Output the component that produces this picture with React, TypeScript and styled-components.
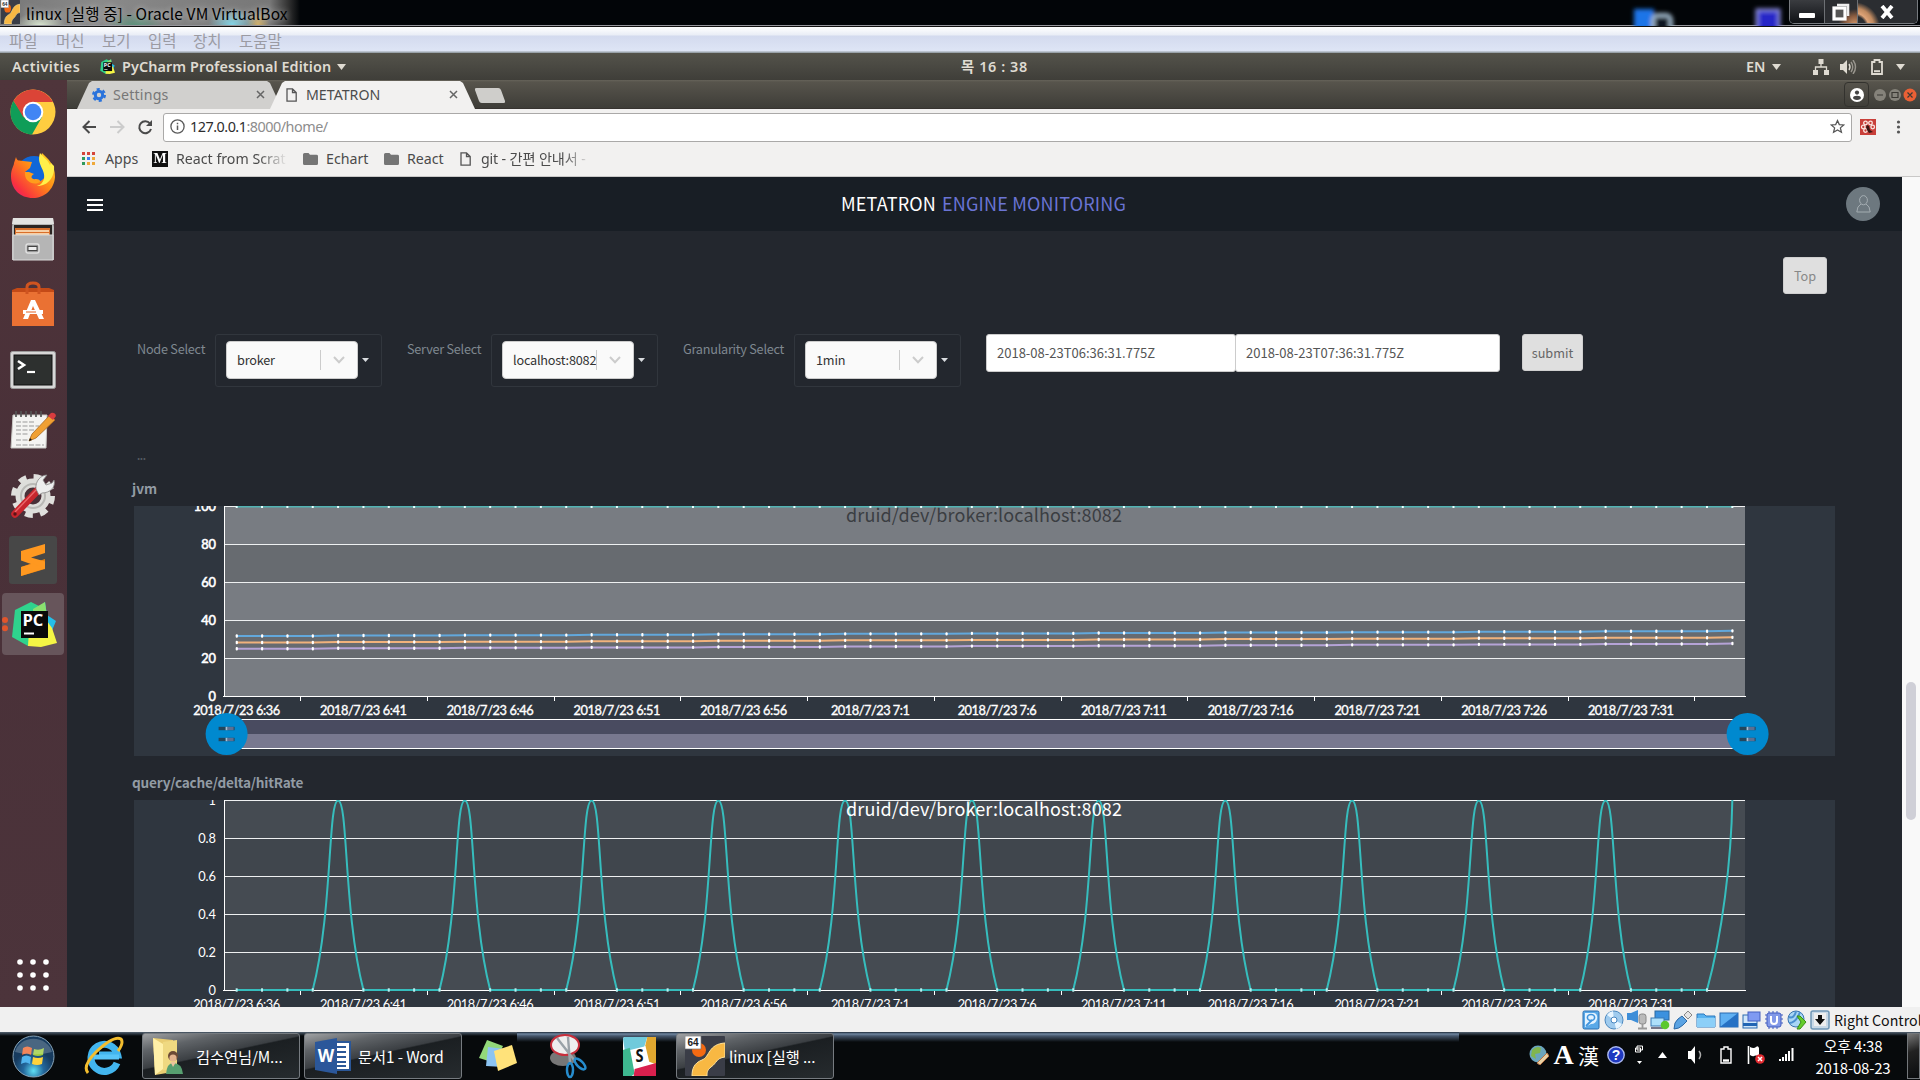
import React from 'react';
import styled, { createGlobalStyle } from 'styled-components';

const PAGE_FONT = '"Noto Sans CJK KR", "Noto Sans", sans-serif';
const UBUNTU_FONT = '"Noto Sans", "Noto Sans CJK KR", sans-serif';

const GlobalStyle = createGlobalStyle`
  html, body { margin: 0; padding: 0; background: #000; overflow: hidden; }
  * { box-sizing: border-box; }
  svg { display: block; flex: none; }
`;

const Desktop = styled.div`
  width: 1920px;
  height: 1080px;
  display: flex;
  flex-direction: column;
  overflow: hidden;
  white-space: nowrap;
  font-family: ${PAGE_FONT};
`;

/* ---------- host window frame ---------- */

const TitleBar = styled.header`
  height: 27px;
  flex: none;
  display: flex;
  align-items: flex-start;
  border-bottom: 1px solid #111;
  box-shadow: inset 0 -1px 0 #96969c;
  background:
    radial-gradient(ellipse 26px 14px at 40px 26px, rgba(225, 240, 215, .95), transparent),
    radial-gradient(ellipse 30px 14px at 135px 26px, rgba(80, 150, 120, .8), transparent),
    radial-gradient(ellipse 24px 16px at 232px 24px, rgba(130, 220, 240, .9), transparent),
    radial-gradient(ellipse 12px 14px at 258px 24px, rgba(230, 190, 100, .8), transparent),
    linear-gradient(90deg, #777 0, #8a8a8a 100px, #777 270px, #333 288px, #020508 300px);
`;

const WindowTitle = styled.div`
  margin-left: 6px;
  height: 26px;
  line-height: 27px;
  flex: 1;
  font-size: 15.5px;
  letter-spacing: 0.12px;
  color: #000;
  text-shadow: 0 0 6px rgba(255, 255, 255, .6);
`;

const Caption = styled.div`
  display: flex;
  width: 129px;
  height: 24px;
  margin-right: 2px;
  border: 1px solid #777b80;
  border-top: 0;
  border-radius: 0 0 5px 5px;
  overflow: hidden;
`;

const CaptionButton = styled.div<{ $w: number; $bg: string }>`
  width: ${p => p.$w}px;
  background: ${p => p.$bg};
  border-right: 1px solid #6d7074;
  display: flex;
  align-items: center;
  justify-content: center;
  &:last-child { border-right: 0; }
`;

const MenuBar = styled.nav`
  height: 26px;
  flex: none;
  display: flex;
  padding-left: 9px;
  background: linear-gradient(#fff 0, #e9edf6 8px, #d3daee 9px, #dee5f6 24px, #9aa3aa 25px);
  color: #9b9ba3;
  font-size: 15.5px;
  line-height: 26px;
`;

const MenuItem = styled.span<{ $w: number }>`
  width: ${p => p.$w}px;
`;

/* ---------- guest desktop ---------- */

const GnomeBar = styled.div`
  height: 27px;
  flex: none;
  display: flex;
  align-items: center;
  background: linear-gradient(#54534b, #3f3e39);
  color: #dfdbd2;
  font: 600 14.4px/26px ${UBUNTU_FONT};
  padding-left: 12px;
  padding-right: 15px;
`;

const GnomeItem = styled.span<{ $w: number; $ls?: number }>`
  width: ${p => p.$w}px;
  flex: none;
  letter-spacing: ${p => p.$ls ?? 0}px;
`;

const Spacer = styled.div<{ $w?: number }>`
  ${p => (p.$w === undefined ? 'flex: 1;' : `flex: none; width: ${p.$w}px;`)}
`;

const Guest = styled.div`
  height: 927px;
  flex: none;
  display: flex;
`;

const Dock = styled.aside`
  width: 67px;
  height: 927px;
  flex: none;
  display: flex;
  flex-direction: column;
  background: linear-gradient(#4f353b, #493038 45%, #4c343b);
`;

const DockCell = styled.div<{ $active?: boolean; $lift?: number }>`
  width: ${p => (p.$active ? 62 : 66)}px;
  height: ${p => (p.$active ? 62 : 64)}px;
  margin: ${p => (p.$active ? '1px 2px' : '0')};
  padding-bottom: ${p => Math.max(0, p.$lift ?? 0) * 2}px;
  padding-top: ${p => Math.max(0, -(p.$lift ?? 0)) * 2}px;
  border-radius: 4px;
  background: ${p => (p.$active ? '#67555b' : 'transparent')};
  display: flex;
  align-items: center;
  justify-content: center;
`;

const Browser = styled.div`
  flex: 1;
  min-width: 0;
  display: flex;
  flex-direction: column;
  font-family: ${UBUNTU_FONT};
`;

const TabStrip = styled.div`
  height: 29px;
  flex: none;
  display: flex;
  align-items: flex-end;
  background: linear-gradient(#66635a 0, #57544c 2px, #3e3d38 28px, #302a28 29px);
  padding-left: 10px;
`;

const Tab = styled.div<{ $active?: boolean; $w: number }>`
  width: ${p => p.$w}px;
  height: 28px;
  flex: none;
  margin-right: ${p => (p.$active ? -6 : -12)}px;
  background: ${p => (p.$active ? '#f2f1f0' : '#d1d0ce')};
  clip-path: polygon(0 100%, 12px 2px, 15px 0, calc(100% - 15px) 0, calc(100% - 12px) 2px, 100% 100%);
  display: flex;
  align-items: center;
  padding: 0 17px 1px ${p => (p.$active ? 16 : 15)}px;
  gap: ${p => (p.$active ? 9 : 7)}px;
  font-size: 14.2px;
  letter-spacing: ${p => (p.$active ? 0 : 0.2)}px;
  color: ${p => (p.$active ? '#4c4c4c' : '#777')};
  z-index: ${p => (p.$active ? 1 : 0)};
`;

const NewTab = styled.div`
  width: 26px;
  height: 15px;
  margin: 0 0 6px 8px;
  background: #cfcecb;
  border-radius: 2px;
  transform: skewX(20deg);
`;

const ProfileButton = styled.div`
  width: 25px;
  height: 25px;
  margin: 0 4px 2px 0;
  border: 1px solid #33322e;
  border-radius: 4px;
  display: flex;
  align-items: center;
  justify-content: center;
`;

const Toolbar = styled.div`
  height: 36px;
  flex: none;
  display: flex;
  align-items: center;
  background: #f2f1f0;
  padding: 0 13px 0 14px;
`;

const AddressBar = styled.div`
  width: 1689px;
  height: 29px;
  border: 1px solid #aaa9a8;
  border-radius: 3px;
  background: #fff;
  display: flex;
  align-items: center;
  padding: 0 6px 1px 6px;
  font-size: 14.4px;
  letter-spacing: -0.5px;
  color: #8d8d8d;
`;

const Host = styled.span`
  color: #2d2d2d;
  margin-left: 5px;
`;

const Bookmarks = styled.div`
  height: 32px;
  flex: none;
  display: flex;
  align-items: center;
  background: #f2f1f0;
  border-bottom: 1px solid #c9c8c7;
  padding: 0 0 4px 15px;
  font-size: 14.2px;
  line-height: 18px;
  color: #4b4b4b;
`;

const Bookmark = styled.div<{ $w: number; $gap: number; $fade?: boolean; $ls?: number }>`
  width: ${p => p.$w}px;
  display: flex;
  align-items: center;
  gap: ${p => p.$gap}px;
  overflow: hidden;
  letter-spacing: ${p => p.$ls ?? 0}px;
  ${p => p.$fade && '-webkit-mask-image: linear-gradient(90deg, #000 78%, transparent 99%);'}
`;

const MediumLogo = styled.div`
  width: 16px;
  height: 16px;
  background: #111;
  color: #fff;
  font: bold 14px/16px "Liberation Serif", serif;
  text-align: center;
`;

const Viewport = styled.div`
  height: 830px;
  flex: none;
  display: flex;
  font-family: ${PAGE_FONT};
`;

const Page = styled.main`
  width: 1835px;
  background: #23272e;
  overflow: hidden;
`;

const ScrollTrack = styled.div`
  width: 18px;
  background: #f9f9f9;
  padding: 505px 4px 0 4px;
`;

const ScrollThumb = styled.div`
  height: 138px;
  border-radius: 5px;
  background: #cfcfd7;
`;

const PageHeader = styled.div`
  height: 54px;
  display: flex;
  align-items: center;
  background: #181e25;
  padding: 0 22px 0 20px;
`;

const Burger = styled.div`
  width: 16px;
  height: 12px;
  margin-top: 2px;
  border-top: 2px solid #fff;
  border-bottom: 2px solid #fff;
  display: flex;
  align-items: center;
  &::after { content: ''; width: 16px; height: 2px; background: #fff; }
`;

const Brand = styled.div`
  width: 300px;
  margin-left: 738px;
  padding-bottom: 2px;
  font-size: 18px;
  letter-spacing: 0.18px;
  line-height: 52px;
  color: #fff;
  display: flex;
  gap: 6px;
  b { font-weight: 400; color: #6a74d4; }
`;

const Avatar = styled.div`
  width: 34px;
  height: 34px;
  border-radius: 50%;
  background: #6d787f;
  display: flex;
  align-items: center;
  justify-content: center;
`;

const TopRow = styled.div`
  display: flex;
  justify-content: flex-end;
  padding: 26px 75px 0 0;
`;

const GreyButton = styled.button<{ $w: number }>`
  width: ${p => p.$w}px;
  height: 37px;
  padding: 0 0 1px;
  border: 1px solid #cfcfcf;
  border-radius: 3px;
  background: #dfdfdf;
  color: ${p => (p.$w < 50 ? '#888' : '#666')};
  font: 12.7px ${PAGE_FONT};
`;

const Filters = styled.div`
  height: 54px;
  margin-top: 40px;
  display: flex;
  align-items: flex-start;
  padding-left: 70px;
`;

const FilterLabel = styled.label<{ $w: number }>`
  width: ${p => p.$w}px;
  line-height: 30px;
  font-size: 12.7px;
  letter-spacing: -0.25px;
  color: #7f8890;
`;

const SelectFrame = styled.div<{ $mr: number }>`
  width: 167px;
  height: 53px;
  margin-right: ${p => p.$mr}px;
  padding-bottom: 2px;
  border: 1px solid #31363d;
  border-radius: 3px;
  display: flex;
  align-items: center;
  padding-left: 10px;
  gap: 4px;
`;

const SelectControl = styled.div`
  width: 132px;
  height: 38px;
  border-radius: 4px;
  background: #fafafa;
  border: 1px solid #ccc;
  display: flex;
  align-items: center;
  padding-left: 10px;
  font-size: 12.7px;
  letter-spacing: -0.2px;
  color: #333;
`;

const SelectValue = styled.span`
  width: 83px;
  flex: none;
`;

const SelectArrow = styled.span`
  height: 20px;
  width: 37px;
  border-left: 1px solid #ccc;
  display: flex;
  align-items: center;
  justify-content: center;
`;

const DateInput = styled.div<{ $w: number }>`
  width: ${p => p.$w}px;
  height: 38px;
  background: #fff;
  border: 1px solid #ccc;
  border-radius: 3px;
  padding-left: 10px;
  font-size: 13px;
  line-height: 36px;
  color: #555;
  & + & { margin-left: -1px; }
`;

const Pending = styled.div`
  margin: 61px 0 2px 70px;
  height: 16px;
  font-size: 10px;
  font-weight: 700;
  line-height: 14px;
  letter-spacing: -0.4px;
  color: #555b62;
`;

const ChartHeading = styled.h4<{ $h: number; $ls?: number }>`
  margin: 0 0 0 65px;
  height: ${p => p.$h}px;
  line-height: ${p => (p.$h < 44 ? 43 : 53)}px;
  font-size: 13.6px;
  font-weight: 700;
  letter-spacing: ${p => p.$ls ?? 0}px;
  color: #929ba4;
`;

const ChartPanel = styled.section<{ $h: number }>`
  width: 1701px;
  height: ${p => p.$h}px;
  margin-left: 67px;
  overflow: hidden;
  background: #2f363f;
`;

/* ---------- bottom bars ---------- */

const VmStatus = styled.div`
  height: 25px;
  flex: none;
  background: #f0f0f0;
  display: flex;
  align-items: center;
  justify-content: flex-end;
  gap: 2.9px;
  padding: 0 2px 0 0;
  color: #111;
`;

const HostKey = styled.span`
  width: 84px;
  margin-left: 1px;
  font: 14.2px/22px ${PAGE_FONT};
`;

const Taskbar = styled.footer`
  height: 48px;
  flex: none;
  display: flex;
  align-items: center;
  background:
    linear-gradient(#1d2a38 0, #6f86a0 2px, #45566b 4px, rgba(7, 10, 12, 0) 10px) 517px 0 / 942px 10px no-repeat,
    linear-gradient(#53616f 0, #28323c 2px, #070a0c 4px);
  padding-left: 12px;
`;

const TaskIcon = styled.div<{ $w: number }>`
  width: ${p => p.$w}px;
  flex: none;
  display: flex;
  justify-content: center;
`;

const TaskButton = styled.div<{ $gap: number; $pad?: number }>`
  width: 158px;
  height: 46px;
  flex: none;
  margin-right: 4px;
  border: 1px solid #767b80;
  border-radius: 3px;
  background: linear-gradient(168deg, #a0a2a4 0, #606468 22%, #3b3f43 45%, #1b1f22 47%, #262b2e 100%);
  display: flex;
  align-items: center;
  padding-left: ${p => p.$pad ?? 8}px;
  gap: ${p => p.$gap}px;
  color: #fff;
  font-size: 15.3px;
  letter-spacing: -0.1px;
`;

const Tray = styled.div`
  display: flex;
  align-items: center;
  color: #fff;
`;

const TrayCell = styled.div<{ $w: number }>`
  width: ${p => p.$w}px;
  display: flex;
  justify-content: center;
  padding-bottom: 3px;
`;

const Ime = styled.span<{ $size: number; $serif?: boolean }>`
  font: ${p => (p.$serif ? 'bold' : '400')} ${p => p.$size}px/26px ${p => (p.$serif ? '"Liberation Serif", serif' : '"Noto Sans CJK KR", sans-serif')};
`;

const Clock = styled.div`
  width: 92px;
  margin-left: 9px;
  font-size: 15px;
  line-height: 22px;
  letter-spacing: -0.2px;
  text-align: center;
  padding-top: 2px;
`;

const ShowDesktop = styled.div`
  width: 13px;
  height: 46px;
  margin-left: 8px;
  border: 1px solid #73777b;
  background: linear-gradient(160deg, #777, #222 40%, #0a0c0e);
`;

/* ---------- icons ---------- */

const Caret = ({ w = 9, h = 6, color = '#dfdbd2', up }: { w?: number; h?: number; color?: string; up?: boolean }) => (
  <svg width={w} height={h} viewBox="0 0 10 6" preserveAspectRatio="none">
    <path d={up ? 'M0 6L5 0L10 6Z' : 'M0 0H10L5 6Z'} fill={color} />
  </svg>
);

const Close = () => (
  <svg width="9" height="9" viewBox="0 0 9 9"><path d="M1 1L8 8M8 1L1 8" stroke="#666" strokeWidth="1.5" /></svg>
);

const PageIcon = () => (
  <svg width="11" height="14" viewBox="0 0 11 14">
    <path d="M1 .8H6.5L10.2 4.5V13.2H1ZM6.5 .8V4.5H10.2" fill="none" stroke="#555" strokeWidth="1.3" />
  </svg>
);

const Folder = () => (
  <svg width="15" height="12" viewBox="0 0 15 12"><path d="M0 1.5Q0 0 1.5 0H5.5L7 1.8H13.5Q15 1.8 15 3.2V10.5Q15 12 13.5 12H1.5Q0 12 0 10.5Z" fill="#757575" /></svg>
);

const VBox = ({ w, h }: { w: number; h: number }) => (
  <svg width={w} height={h} viewBox="0 0 40 40" preserveAspectRatio="none">
    <rect width="40" height="40" rx="1" fill="#3a3d47" />
    <circle cx="14" cy="14" r="7" fill="#f46a12" />
    <path d="M7 40C7 33 9 27 17 24C25 21 23 8 40 7V21C31 22 32 27 26 31C22 34 22 37 22 40Z" fill="#f8b843" stroke="#ffe29a" strokeWidth="1" />
    <rect x="0" y="0" width="16" height="13" fill="#fff" stroke="#777" strokeWidth=".7" />
    <text x="8" y="10" fontSize="10" fontWeight="700" textAnchor="middle" fontFamily="Liberation Sans, sans-serif" fill="#222">64</text>
  </svg>
);

const PyCharm = ({ s }: { s: number }) => (
  <svg width={s} height={s} viewBox="0 0 46 46">
    <path d="M4 9L20 1L30 6V42L17 45L1 36Z" fill="#2fd38d" />
    <path d="M24 9L34 1L36 14L45 20L40 32H24Z" fill="#25bfe8" />
    <path d="M22 8L34 1L36 16H22Z" fill="#8be06e" />
    <path d="M17 45L18 30L36 20L41 27L46 42L30 46Z" fill="#f5f545" />
    <rect x="10" y="10" width="27" height="27" fill="#0a0a0a" />
    <text x="11.5" y="25" fontSize="16.5" fontWeight="700" fontFamily="Open Sans, sans-serif" fill="#fff">PC</text>
    <rect x="13" y="31.5" width="10" height="2" fill="#fff" />
  </svg>
);

const Chrome = () => (
  <svg width="46" height="46" viewBox="0 0 46 46">
    <circle cx="23" cy="23" r="22.5" fill="#ffcd40" />
    <path d="M3.5 11.7A22.5 22.5 0 0 0 22 45.5L32 28L14 27Z" fill="#0f9d58" />
    <path d="M3.5 11.7A22.5 22.5 0 0 1 43 13H23L13.5 28.5Z" fill="#db4437" />
    <circle cx="23" cy="23" r="10.3" fill="#fff" />
    <circle cx="23" cy="23" r="8.3" fill="#4285f4" />
  </svg>
);

const Firefox = () => (
  <svg width="46" height="46" viewBox="0 0 46 46">
    <defs>
      <linearGradient id="fox" x1="1" y1="0" x2="0" y2="1">
        <stop offset="0" stopColor="#ffe226" /><stop offset=".45" stopColor="#ff8a16" /><stop offset=".8" stopColor="#f8313f" /><stop offset="1" stopColor="#e31587" />
      </linearGradient>
    </defs>
    <circle cx="24" cy="22" r="18" fill="#1067d8" />
    <path d="M6 5C7 10 10 8 13 9L22 10L20 16L15 20C16 31 29 34 35 25C39 17 31 13 30 7L32 1C38 7 45 12 45 25C44 38 34 46 23 46C10 46 1 37 1 24C1 17 4 14 4 11Z" fill="url(#fox)" />
    <path d="M15 20C14 29 22 33 28 31C32 30 30 27 26 27C21 28 20 24 24 22L19 20Z" fill="#ff9d1c" />
    <path d="M30 1C26 13 36 17 34 27C32 32 30 33 27 34C39 34 45 24 44 14L41 11L40 13C38 8 34 6 30 1Z" fill="#fff04a" />
  </svg>
);

const Files = () => (
  <svg width="44" height="44" viewBox="0 0 44 44">
    <path d="M2 1H42L43 10V43H1V10Z" fill="#b7b8b7" />
    <path d="M2 1H42L43 7H1Z" fill="#e3e3e1" />
    <rect x="3" y="8" width="38" height="12" fill="#2b2522" />
    <rect x="4" y="11" width="35" height="8" fill="#d96f2b" />
    <path d="M5 14H38M5 17H38" stroke="#fff0d0" strokeWidth="1.6" />
    <path d="M2 18H42V43H2Z" fill="#b5b5b5" stroke="#d9d9d9" />
    <rect x="15" y="27" width="13" height="9" rx="2" fill="#999" stroke="#e1e1e1" strokeWidth="1.4" />
    <rect x="17" y="29.5" width="9" height="4" fill="#eee" stroke="#444" />
  </svg>
);

const Software = () => (
  <svg width="44" height="46" viewBox="0 0 44 46">
    <path d="M1 9L6 7H38L43 9V14H1Z" fill="#c44a17" />
    <rect x="1" y="11" width="42" height="34" fill="#ea7133" />
    <path d="M16 13V6Q16 2 22 2Q28 2 28 6V13" fill="none" stroke="#cf5420" strokeWidth="3" />
    <path d="M20 19H24L33 38H28L22 25L17 38H12Z" fill="#fff" />
    <path d="M12 31H32" stroke="#fff" strokeWidth="4" />
    <path d="M15 31H25" stroke="#e46325" strokeWidth="1" />
  </svg>
);

const Terminal = () => (
  <svg width="46" height="38" viewBox="0 0 46 38">
    <rect x=".5" y=".5" width="45" height="37" rx="2" fill="#d7d7d7" stroke="#9b9b9b" />
    <rect x="4" y="4" width="38" height="30" fill="#2d302f" stroke="#111" />
    <path d="M8 10L14 14L8 18" fill="none" stroke="#fff" strokeWidth="2.6" />
    <path d="M17 21H25" stroke="#fff" strokeWidth="2.2" />
  </svg>
);

const Notes = () => (
  <svg width="48" height="40" viewBox="0 0 48 40">
    <path d="M4 5H38L37 38H2Z" fill="#f4f4f2" stroke="#c8c8c4" />
    <path d="M7 1V7M12 1V7M17 1V7M22 1V7M27 1V7M32 1V7" stroke="#555" strokeWidth="1.7" />
    <path d="M7 12H25M7 16H30M7 20H26M7 24H20M7 30H22M7 35H35" stroke="#999" strokeDasharray="5 1.5" />
    <path d="M41 5L46 10L27 28L20 31L23 24Z" fill="#f0a033" stroke="#a96a20" strokeWidth=".8" />
    <path d="M39 6L42 3Q46 2 47 6L44 10Z" fill="#d83c3f" />
    <path d="M20 31L21 28L23 30Z" fill="#111" />
  </svg>
);

const Settings = () => (
  <svg width="46" height="46" viewBox="0 0 46 46">
    <circle cx="23" cy="24" r="18.5" fill="none" stroke="#e0e0dd" strokeWidth="7" strokeDasharray="7.5 7.03" />
    <circle cx="23" cy="24" r="13" fill="none" stroke="#dededb" strokeWidth="9" />
    <circle cx="23" cy="24" r="12" fill="none" stroke="#b9b9b6" strokeWidth="2" />
    <path d="M5 42L28 18" stroke="#c7262d" strokeWidth="7.5" strokeLinecap="round" />
    <path d="M5 40L26 18" stroke="#ed666a" strokeWidth="1.4" />
    <path d="M26 17C25 9 31 3 37 3L33 8L36 13L42 11L44 8C46 15 40 21 32 21L29 23Z" fill="#edeeee" stroke="#888" strokeWidth=".8" />
    <circle cx="5" cy="42" r="1.7" fill="#5b1215" />
  </svg>
);

const Sublime = () => (
  <svg width="48" height="48" viewBox="0 0 48 48">
    <rect width="48" height="48" rx="3" fill="#474747" />
    <path d="M12 31L36 23V33L12 40Z" fill="#e8820f" />
    <path d="M12 15L36 8V17L22 21.5L36 25.5V33L12 24.5Z" fill="#ff9820" />
    <path d="M12 31L24 27.5L36 32.5L12 40Z" fill="#ff9820" />
  </svg>
);

const AppGrid = () => (
  <svg width="32" height="32" viewBox="0 0 32 32">
    {[3, 16, 29].map(y => [3, 16, 29].map(x => <circle key={`${x}-${y}`} cx={x} cy={y} r="2.8" fill="#fff" />))}
  </svg>
);

const ActiveDots = () => (
  <svg width="6" height="18" viewBox="0 0 6 18"><circle cx="3" cy="5" r="3" fill="#e2552c" /><circle cx="3" cy="13.3" r="3" fill="#e2552c" /></svg>
);

/* ---------- charts ---------- */

const POINTS = 60;
const STEP = 1521 / POINTS;
const LEFT = 90;
const RIGHT = 1611;
const px = (i: number) => LEFT + STEP * (i + 0.5);
const TIMES = ['6:36', '6:41', '6:46', '6:51', '6:56', '7:1', '7:6', '7:11', '7:16', '7:21', '7:26', '7:31'];
const idx = Array.from({ length: POINTS }, (_, i) => i);

interface AxesProps { bands: [string, string]; yLabels: string[]; strong?: boolean }

const Axes = ({ bands, yLabels, strong }: AxesProps) => (
  <g>
    {[0, 1, 2, 3, 4].map(i => <rect key={i} x={LEFT} y={i * 38} width={RIGHT - LEFT} height="38" fill={bands[i % 2]} />)}
    {[0, 1, 2, 3, 4, 5].map(i => <path key={i} d={`M${LEFT} ${i * 38 + 0.5}H${RIGHT}`} stroke="#eef0f1" />)}
    <path d={`M${LEFT + 0.5} 0V190M${LEFT - 1} 190.5H${RIGHT + 1}`} stroke="#fff" />
    {TIMES.map((_, k) => <path key={k} d={`M${Math.round(LEFT + STEP * (3 + 5 * k)) + 0.5} 191V195`} stroke="#fff" />)}
    <g fontFamily="Lato, sans-serif" fontSize="12.8" fill="#fff" stroke="#fff" strokeWidth={strong ? 0.35 : 0}>
      {yLabels.map((l, i) => <text key={l} x="82" y={i * 38 + 5} textAnchor="end" strokeWidth={strong ? 0.6 : 0}>{l}</text>)}
      {TIMES.map((t, k) => (
        <text key={t} x={px(5 * k)} y="209" textAnchor="middle" textLength={t.length === 3 ? 79 : t.startsWith('7:') ? 86 : 87}>2018/7/23 {t}</text>
      ))}
    </g>
  </g>
);

const ChartTitle = ({ color }: { color: string }) => (
  <text x="712" y="16" fontSize="18" textLength="276" fontFamily={'"Noto Sans CJK KR", sans-serif'} fill={color}>druid/dev/broker:localhost:8082</text>
);

const STARTS = [
  { base: 130, color: '#62a8dc' },
  { base: 136.5, color: '#f0b27c' },
  { base: 142.7, color: '#b5a3d6' },
];
const drift = (i: number) => Math.floor((i + 1) / 5) * 0.43;

const Handle = ({ x }: { x: number }) => (
  <g>
    <circle cx={x} cy="228" r="21" fill="#0089cf" />
    {[222.5, 233.5].map(y => (
      <g key={y}>
        <path d={`M${x - 8} ${y}H${x + 8}`} stroke="#23465c" strokeWidth="3.4" />
        <path d={`M${x} ${y - 1.7}V${y + 1.7}`} stroke="#a7c0d6" strokeWidth="2" />
        <path d={`M${x + 1} ${y}H${x + 7}`} stroke="#5d6f92" strokeWidth="3.2" />
      </g>
    ))}
  </g>
);

const JvmChart = () => (
  <svg width="1701" height="250" viewBox="0 0 1701 250">
    <Axes bands={['#787c82', '#676b70']} yLabels={['100', '80', '60', '40', '20', '0']} strong />
    <path d={`M${px(0)} .5H${px(59)}`} stroke="#52b3b3" strokeWidth="2" />
    {idx.map(i => <rect key={i} x={px(i) - 1} y="0" width="2" height="2" fill="#e4ffff" />)}
    {STARTS.map(s => (
      <g key={s.color}>
        <polyline fill="none" stroke={s.color} strokeWidth="2" points={idx.map(i => `${px(i)},${s.base - drift(i)}`).join(' ')} />
        {idx.map(i => <rect key={i} x={px(i) - 1} y={s.base - drift(i) - 1.7} width="2.2" height="3.4" rx="1" fill="#fff" />)}
      </g>
    ))}
    <ChartTitle color="#3b3e42" />
    <rect x="92" y="213" width="1521" height="15" fill="#494b60" />
    <rect x="92" y="228" width="1521" height="15" fill="#78788f" />
    <path d="M92 213.5H1613M92 242.5H1613" stroke="#fff" />
    <Handle x={92.6} />
    <Handle x={1613.6} />
  </svg>
);

const hitRatePath = () => {
  let d = `M${px(0)} 190`;
  for (let k = 3; k < 58; k += 5) {
    const a = px(k), b = px(k + 1), c = px(k + 2);
    d += `L${a} 190C${a + STEP * 0.78} 114 ${a + STEP * 0.6} 0.5 ${b} 0.5C${c - STEP * 0.6} 0.5 ${c - STEP * 0.78} 114 ${c} 190`;
  }
  return `${d}L${px(58)} 190C${px(58) + STEP * 0.6} 135 ${px(59) - 1} 60 ${px(59)} 0`;
};

const HitRateChart = () => (
  <svg width="1701" height="250" viewBox="0 0 1701 250">
    <Axes bands={['#454b52', '#40464d']} yLabels={['1', '0.8', '0.6', '0.4', '0.2', '0']} />
    <path d={hitRatePath()} fill="none" stroke="#36bdbd" strokeWidth="2" />
    {idx.filter(i => i % 5 !== 4).map(i => <rect key={i} x={px(i) - 1} y="188.3" width="2" height="3.4" fill="#b9efef" />)}
    <ChartTitle color="#fff" />
  </svg>
);

const Select = ({ label, labelWidth, value, gap }: { label: string; labelWidth: number; value: string; gap: number }) => (
  <>
    <FilterLabel $w={labelWidth}>{label}</FilterLabel>
    <SelectFrame $mr={gap}>
      <SelectControl>
        <SelectValue>{value}</SelectValue>
        <SelectArrow><svg width="12" height="8" viewBox="0 0 12 8"><path d="M1 1L6 6.2L11 1" fill="none" stroke="#ccc" strokeWidth="2" /></svg></SelectArrow>
      </SelectControl>
      <Caret w={7} h={4} color="#d9dcdf" />
    </SelectFrame>
  </>
);

/* ---------- small status icons ---------- */

const statusShapes: React.ReactNode[] = [
  <><rect x="2" y="1" width="16" height="18" rx="1.5" fill="#5aa9e8" stroke="#2a6fb0" /><path d="M4 3H13Q17 4 16 9Q15 14 10 14L4 17Z" fill="#e4f3ff" /><ellipse cx="10" cy="7.5" rx="3.6" ry="3" fill="none" stroke="#3f94dd" strokeWidth="1.6" /><path d="M5 16L11 10" stroke="#3f94dd" strokeWidth="1.8" /></>,
  <><circle cx="10" cy="10" r="9" fill="#9fcbee" stroke="#4a87be" /><path d="M10 10L3 5A9 9 0 0 1 9 1ZM10 10L18 14A9 9 0 0 1 12 19Z" fill="#e7f5ff" /><circle cx="10" cy="10" r="3" fill="#fff" stroke="#4886c0" /></>,
  <><path d="M0 3H4L11 0V13L4 10H0Z" fill="#3e8ed8" /><rect x="12" y="4" width="7" height="10" rx="2.5" fill="#bbb" stroke="#888" /><path d="M15.5 14V18M11 18.5H20" stroke="#999" strokeWidth="1.8" /></>,
  <><rect x="5" y="1" width="14" height="9" fill="#3b91df" stroke="#2b68a0" /><rect x="1" y="8" width="13" height="8" fill="#aee0fa" stroke="#3a7ab5" /><path d="M1 18H13" stroke="#778" strokeWidth="2" /><circle cx="15" cy="15" r="4.3" fill="#5ac82e" /></>,
  <><path d="M1 19Q1 12 5 9L9 6L14 11L10 15Q6 19 1 19Z" fill="#5aa3e3" stroke="#2d69a5" /><path d="M11 5L15 1L19 5L15 9Z" fill="#e5e5e5" stroke="#888" /></>,
  <><path d="M1 4H8L10 6H19V17H1Z" fill="#59b3f0" stroke="#2d78bd" /><path d="M1 8H19V17H1Z" fill="#8ccff8" /></>,
  <><rect x="1" y="3" width="18" height="14" fill="#5fb0f2" stroke="#2a6bb0" /><path d="M1 17L19 3V17Z" fill="#2671c4" /></>,
  <><rect x="2" y="5" width="14" height="13" fill="#cfe6fa" stroke="#2a6bb0" /><rect x="7" y="2" width="12" height="9" fill="#7f9af2" stroke="#4560c0" /><path d="M2 14.5H16" stroke="#2164b3" strokeWidth="3" /></>,
  <><rect x="3" y="3" width="14" height="14" rx="2" fill="#8299e8" stroke="#405cc0" /><path d="M1 5H3M1 9H3M1 13H3M17 5H19M17 9H19M17 13H19M5 1V3M9 1V3M13 1V3M5 17V19M9 17V19M13 17V19" stroke="#405cc0" /><path d="M7 6V11Q7 14 10 14Q13 14 13 11V6" fill="none" stroke="#fff" strokeWidth="2" /></>,
  <><circle cx="9" cy="9" r="8" fill="#a9d6f5" stroke="#3972ae" /><path d="M2 7Q7 9 9 1.5M2 13Q9 13 13 2" stroke="#4b8fd0" strokeWidth="2" fill="none" /><path d="M10 6L13 6L19 12L13 19H10L14 12Z" fill="#64cd2b" stroke="#3c8d16" /></>,
  <><rect x="1" y="1" width="18" height="18" rx="2" fill="#c9d9e7" stroke="#6f97b6" strokeWidth="1.5" /><rect x="4" y="3" width="12" height="13" fill="#eee" /><path d="M8 5H12V9H15L10 15L5 9H8Z" fill="#111" /></>,
];

const Dots = () => (
  <svg width="5" height="14" viewBox="0 0 5 14">{[2, 7, 12].map(y => <circle key={y} cx="2.5" cy={y} r="1.6" fill="#555" />)}</svg>
);

export default function App() {
  return (
    <Desktop>
      <GlobalStyle />
      <TitleBar>
        <Spacer $w={1} />
        <Spacer $w={19}><VBox w={19} h={24} /></Spacer>
        <WindowTitle>linux [실행 중] - Oracle VM VirtualBox</WindowTitle>
        <svg width="245" height="26" viewBox="0 0 245 26">
          <defs><filter id="soft" x="-30%" y="-30%" width="160%" height="160%"><feGaussianBlur stdDeviation="2.3" /></filter></defs>
          <g filter="url(#soft)">
            <rect x="90" y="9" width="20" height="24" fill="#1b75e8" />
            <rect x="109" y="15" width="18" height="18" rx="5" fill="#101820" stroke="#9fb6c9" strokeWidth="4" />
            <rect x="213" y="10" width="22" height="24" fill="#2626c8" stroke="#8b8de0" strokeWidth="3" />
          </g>
        </svg>
        <Caption>
          <CaptionButton $w={36} $bg="linear-gradient(#3a3c40, #101216)"><svg width="16" height="14" viewBox="0 0 16 14"><rect y="8" width="16" height="5" rx="1" fill="#fff" /></svg></CaptionButton>
          <CaptionButton $w={33} $bg="radial-gradient(circle at 30px 26px, #e0a070 0, #8a5c40 10px, #2b2d31 17px)"><svg width="18" height="18" viewBox="0 0 18 18"><path d="M5 2H16V13" fill="none" stroke="#eee" strokeWidth="2.6" /><rect x="2" y="5" width="11" height="11" fill="#555" stroke="#fff" strokeWidth="3.2" /></svg></CaptionButton>
          <CaptionButton $w={60} $bg="radial-gradient(circle at -4px 28px, #2b2d31 12px, #dfa478 15px, #c08a60 20px, #2b2d31 26px)"><svg width="14" height="14" viewBox="0 0 14 14"><path d="M2 1L12 13M12 1L2 13" stroke="#fff" strokeWidth="3.8" /></svg></CaptionButton>
        </Caption>
      </TitleBar>
      <MenuBar>
        <MenuItem $w={47}>파일</MenuItem>
        <MenuItem $w={46}>머신</MenuItem>
        <MenuItem $w={46}>보기</MenuItem>
        <MenuItem $w={45}>입력</MenuItem>
        <MenuItem $w={46}>장치</MenuItem>
        <MenuItem $w={60}>도움말</MenuItem>
      </MenuBar>
      <GnomeBar>
        <GnomeItem $w={88} $ls={0.4}>Activities</GnomeItem>
        <PyCharm s={15} />
        <Spacer $w={7} />
        <GnomeItem $w={215} $ls={0.1}>PyCharm Professional Edition</GnomeItem>
        <Caret />
        <Spacer $w={615} />
        <GnomeItem $w={80} $ls={0.6}>목 16 : 38</GnomeItem>
        <Spacer />
        <GnomeItem $w={26}>EN</GnomeItem>
        <Caret />
        <Spacer $w={32} />
        <svg width="16" height="16" viewBox="0 0 16 16"><path d="M5.5 0H10.5V5H5.5ZM0 11H5V16H0ZM11 11H16V16H11Z" fill="#dfdbd2" /><path d="M8 5V8M2.5 11V8H13.5V11" stroke="#dfdbd2" fill="none" strokeWidth="1.3" /></svg>
        <Spacer $w={11} />
        <svg width="17" height="14" viewBox="0 0 17 14"><path d="M0 4H3L7 0V14L3 10H0Z" fill="#dfdbd2" /><path d="M9 4Q11 7 9 10" stroke="#dfdbd2" strokeWidth="1.4" fill="none" /><path d="M11 2Q14.5 7 11 12M13 0Q18 7 13 14" stroke="#99968e" strokeWidth="1.4" fill="none" /></svg>
        <Spacer $w={14} />
        <svg width="12" height="16" viewBox="0 0 12 16"><path d="M1 3H3.5V1H8.5V3H11V15H1Z" fill="none" stroke="#dfdbd2" strokeWidth="1.8" /><path d="M3 12.2H9" stroke="#dfdbd2" strokeWidth="2" /></svg>
        <Spacer $w={13} />
        <Caret />
      </GnomeBar>
      <Guest>
        <Dock>
          <DockCell><Chrome /></DockCell>
          <DockCell $lift={1}><Firefox /></DockCell>
          <DockCell $lift={1}><Files /></DockCell>
          <DockCell><Software /></DockCell>
          <DockCell $lift={-1.5}><Terminal /></DockCell>
          <DockCell $lift={2}><Notes /></DockCell>
          <DockCell $lift={1.5}><Settings /></DockCell>
          <DockCell><Sublime /></DockCell>
          <DockCell $active><ActiveDots /><Spacer $w={3} /><PyCharm s={46} /><Spacer $w={8} /></DockCell>
          <Spacer />
          <DockCell><AppGrid /></DockCell>
        </Dock>
        <Browser>
          <TabStrip>
            <Tab $w={205}>
              <svg width="14" height="14" viewBox="0 0 14 14"><circle cx="7" cy="7" r="3.7" fill="none" stroke="#2a73dc" strokeWidth="3" /><circle cx="7" cy="7" r="5.9" fill="none" stroke="#2a73dc" strokeWidth="2.2" strokeDasharray="3.1 3.08" /></svg>
              Settings
              <Spacer />
              <Close />
            </Tab>
            <Tab $w={205} $active>
              <PageIcon />
              METATRON
              <Spacer />
              <Close />
            </Tab>
            <NewTab />
            <Spacer />
            <ProfileButton><svg width="14" height="14" viewBox="0 0 14 14"><circle cx="7" cy="7" r="7" fill="#fff" /><circle cx="7" cy="4.6" r="2.1" fill="#444" /><ellipse cx="7" cy="9.8" rx="3.9" ry="2.1" fill="#444" /></svg></ProfileButton>
            <svg width="47" height="28" viewBox="0 0 47 28">
              <circle cx="7" cy="14" r="6" fill="#85827a" /><circle cx="22" cy="14" r="6" fill="#85827a" /><circle cx="37" cy="14" r="6.5" fill="#ea6035" />
              <path d="M4 14H10M19 11.5H25V16.5H19ZM34.5 11.5L39.5 16.5M39.5 11.5L34.5 16.5" stroke="#3b3934" strokeWidth="1.2" fill="none" />
            </svg>
          </TabStrip>
          <Toolbar>
            <svg width="72" height="18" viewBox="0 0 72 18">
              <path d="M15 9H3M8.5 3L2.5 9L8.5 15" fill="none" stroke="#4a4a4a" strokeWidth="2" />
              <path d="M29 9H42M36.5 3L42.5 9L36.5 15" fill="none" stroke="#ccc" strokeWidth="2" />
              <path d="M69 5.5A6 6 0 1 0 70 11" fill="none" stroke="#4a4a4a" strokeWidth="2" /><path d="M71 2V8H65Z" fill="#4a4a4a" />
            </svg>
            <Spacer $w={10} />
            <AddressBar>
              <svg width="15" height="15" viewBox="0 0 15 15"><circle cx="7.5" cy="7.5" r="6.6" fill="none" stroke="#5b5b5b" strokeWidth="1.3" /><path d="M7.5 6.5V11M7.5 3.7V5.2" stroke="#5b5b5b" strokeWidth="1.5" /></svg>
              <Host>127.0.0.1</Host>:8000/home/
              <Spacer />
              <svg width="15" height="15" viewBox="0 0 24 24"><path d="M12 2.5L14.9 9L22 9.6L16.6 14.2L18.3 21.2L12 17.4L5.7 21.2L7.4 14.2L2 9.6L9.1 9Z" fill="none" stroke="#555" strokeWidth="2" /></svg>
            </AddressBar>
            <Spacer $w={8} />
            <svg width="16" height="16" viewBox="0 0 16 16"><rect width="16" height="16" fill="#c9403a" /><g fill="none" stroke="#fbe6e0" strokeWidth="1.3"><circle cx="5.5" cy="4" r="1.8" /><circle cx="10.5" cy="4" r="1.8" /><circle cx="3.3" cy="8" r="1.8" /><circle cx="12.7" cy="8" r="1.8" /><circle cx="5.5" cy="11.5" r="1.8" /></g><path d="M7 6L9 7L10 11L13 13L9 14L7 11L6 8Z" fill="#3b1714" /></svg>
            <Spacer />
            <Dots />
            <Spacer $w={6} />
          </Toolbar>
          <Bookmarks>
            <Bookmark $w={70} $gap={10}>
              <svg width="13" height="13" viewBox="0 0 13 13">
                {['#d5453a', '#d5453a', '#d5453a', '#2f9a5c', '#3b7ded', '#efa93a', '#2f9a5c', '#efa93a', '#efa93a'].map((c, i) => (
                  <rect key={i} x={(i % 3) * 5} y={Math.floor(i / 3) * 5} width="3" height="3" fill={c} />
                ))}
              </svg>
              Apps
            </Bookmark>
            <Bookmark $w={137} $gap={8} $fade><MediumLogo>M</MediumLogo>React from Scrat</Bookmark>
            <Spacer $w={14} />
            <Bookmark $w={81} $gap={8}><Folder />Echart</Bookmark>
            <Bookmark $w={76} $gap={8}><Folder />React</Bookmark>
            <Bookmark $w={132} $gap={10} $fade $ls={-0.15}><PageIcon />git - 간편 안내서 -</Bookmark>
          </Bookmarks>
          <Viewport>
            <Page>
              <PageHeader>
                <Burger />
                <Brand>METATRON <b>ENGINE MONITORING</b></Brand>
                <Spacer />
                <Avatar><svg width="15" height="18" viewBox="0 0 15 18"><ellipse cx="7.5" cy="5.2" rx="3.9" ry="4.6" fill="none" stroke="#a4adb2" /><path d="M5 9Q1 11 .8 17H14.2Q14 11 10 9" fill="none" stroke="#a4adb2" /></svg></Avatar>
              </PageHeader>
              <TopRow><GreyButton $w={44}>Top</GreyButton></TopRow>
              <Filters>
                <Select label="Node Select" labelWidth={78} value="broker" gap={25} />
                <Select label="Server Select" labelWidth={84} value="localhost:8082" gap={25} />
                <Select label="Granularity Select" labelWidth={111} value="1min" gap={25} />
                <DateInput $w={250}>2018-08-23T06:36:31.775Z</DateInput>
                <DateInput $w={265}>2018-08-23T07:36:31.775Z</DateInput>
                <Spacer $w={22} />
                <GreyButton $w={61}>submit</GreyButton>
              </Filters>
              <Pending>...</Pending>
              <ChartHeading $h={39}>jvm</ChartHeading>
              <ChartPanel $h={250}><JvmChart /></ChartPanel>
              <ChartHeading $h={44} $ls={-0.2}>query/cache/delta/hitRate</ChartHeading>
              <ChartPanel $h={207}><HitRateChart /></ChartPanel>
            </Page>
            <ScrollTrack><ScrollThumb /></ScrollTrack>
          </Viewport>
        </Browser>
      </Guest>
      <VmStatus>
        {statusShapes.map((shape, i) => <svg key={i} width="20" height="20" viewBox="0 0 20 20">{shape}</svg>)}
        <HostKey>Right Control</HostKey>
      </VmStatus>
      <Taskbar>
        <TaskIcon $w={43}>
          <svg width="43" height="43" viewBox="0 0 43 43">
            <defs><radialGradient id="orb" cx=".5" cy=".85"><stop offset="0" stopColor="#5fe0f5" /><stop offset=".5" stopColor="#23679c" /><stop offset="1" stopColor="#173b5e" /></radialGradient></defs>
            <circle cx="21.5" cy="21.5" r="20.5" fill="url(#orb)" stroke="#8aa7bb" />
            <path d="M11 13Q15 10 20 13L19 20Q15 17 10 20Z" fill="#f0642c" /><path d="M22 14Q27 16 32 13L31 20Q26 22 21 20Z" fill="#9bcb3c" />
            <path d="M10 22Q14 19 19 22L18 29Q14 26 9 29Z" fill="#52b5ee" /><path d="M21 22Q26 24 31 22L30 29Q25 31 20 29Z" fill="#ffd23c" />
            <path d="M3 17A19 17 0 0 1 40 17Q21 22 3 17Z" fill="#fff" opacity=".22" />
          </svg>
        </TaskIcon>
        <Spacer $w={11} />
        <TaskIcon $w={76}>
          <svg width="40" height="40" viewBox="0 0 40 40">
            <path d="M33 27A13.5 13.5 0 1 1 33.7 19H15" fill="none" stroke="#42b5ee" strokeWidth="7" />
            <path d="M10 21H35" stroke="#58c5f8" strokeWidth="5" />
            <path d="M4 37Q-2 30 12 16Q30 -1 37 3Q40 7 34 15" fill="none" stroke="#f3bd2e" strokeWidth="3" />
          </svg>
        </TaskIcon>
        <TaskButton $gap={11}>
          <svg width="34" height="40" viewBox="0 0 34 40"><path d="M2 2L22 4V36L4 39Z" fill="#e9cd72" /><path d="M12 6L26 4V34H12Z" fill="#efd981" /><path d="M2 2L12 8V33L4 39Z" fill="#fff0a8" /><circle cx="22" cy="20" r="5" fill="#6b4a35" /><circle cx="22" cy="22" r="3.6" fill="#e3b48e" /><path d="M15 38Q16 27 22 27Q31 27 32 38Z" fill="#579f70" /><path d="M19.5 26L22 31L25 26Z" fill="#ebc39e" /></svg>
          김수연님/M...
        </TaskButton>
        <TaskButton $gap={7} $pad={10}>
          <svg width="36" height="36" viewBox="0 0 36 36"><rect x="17" y="4" width="18" height="28" fill="#fff" stroke="#2b5797" strokeWidth="2" /><path d="M20 9H31M20 14H31M20 19H31M20 24H31M20 28H31" stroke="#2b5797" strokeWidth="2.2" /><path d="M0 4L22 0V36L0 32Z" fill="#2b579a" /><text x="11" y="24" textAnchor="middle" fontFamily="Open Sans, sans-serif" fontWeight="700" fontSize="17" fill="#fff">W</text></svg>
          문서1 - Word
        </TaskButton>
        <TaskIcon $w={64}>
          <svg width="38" height="34" viewBox="0 0 38 34"><path d="M8 1L24 7L16 24L0 19Z" fill="#93d97a" /><path d="M9 8L26 10L24 28L7 27Z" fill="#8cc4f2" /><path d="M15 12L33 6L38 24L19 32Z" fill="#ffe27a" /></svg>
        </TaskIcon>
        <TaskIcon $w={76}>
          <svg width="38" height="46" viewBox="0 0 38 46"><ellipse cx="14" cy="25" rx="13" ry="8" fill="#777" /><ellipse cx="16" cy="12" rx="14" ry="10" fill="#eee" stroke="#c72f3c" strokeWidth="2" /><path d="M8 5L26 28M19 4L21 30" stroke="#9aa2a8" strokeWidth="2.4" /><ellipse cx="21" cy="37" rx="3" ry="7" fill="none" stroke="#268ccd" strokeWidth="2.5" /><ellipse cx="31" cy="31" rx="3" ry="7" transform="rotate(-45 31 31)" fill="none" stroke="#268ccd" strokeWidth="2.5" /></svg>
        </TaskIcon>
        <TaskIcon $w={66}>
          <svg width="33" height="39" viewBox="0 0 34 33" preserveAspectRatio="none"><rect width="34" height="33" rx="2" fill="#fff" /><path d="M0 2Q0 0 2 0H25L22 8L2 12Z" fill="#70cadb" /><path d="M25 0H34V23L27 21L23 7Z" fill="#e0a72f" /><path d="M0 11L7 9L12 31L9 33H0Z" fill="#3eb890" /><path d="M12 27L34 22V33H11Z" fill="#d9204e" /><text x="17" y="21" textAnchor="middle" fontFamily="Open Sans, sans-serif" fontWeight="700" fontSize="15" fill="#111">S</text></svg>
        </TaskIcon>
        <Spacer $w={4} />
        <TaskButton $gap={4}><VBox w={40} h={40} />linux [실행 ...</TaskButton>
        <Spacer />
        <Tray>
          <TrayCell $w={24}><svg width="20" height="20" viewBox="0 0 20 20"><circle cx="9" cy="9" r="8.5" fill="#6ba5bd" /><path d="M3 5Q8 0 12 3L11 8L6 9L7 14L2 11Z" fill="#81b64d" /><path d="M8 18L18 8L20 11L11 20Z" fill="#e8d1a5" stroke="#b87245" /></svg></TrayCell>
          <TrayCell $w={25}><Ime $size={28} $serif>A</Ime></TrayCell>
          <TrayCell $w={25}><Ime $size={21}>漢</Ime></TrayCell>
          <TrayCell $w={29}><svg width="18" height="18" viewBox="0 0 18 18"><circle cx="9" cy="9" r="8.2" fill="#2039c0" stroke="#aab8f0" strokeWidth="1.4" /><text x="9" y="14" textAnchor="middle" fontFamily="Liberation Sans, sans-serif" fontWeight="700" fontSize="14" fill="#fff">?</text></svg></TrayCell>
          <TrayCell $w={18}><svg width="8" height="20" viewBox="0 0 8 20"><path d="M2 1H7.5V5H2ZM.5 3H5.5V7H.5Z" fill="#111" stroke="#fff" /><path d="M2 16H7L4.5 19Z" fill="#fff" /></svg></TrayCell>
          <TrayCell $w={28}><Caret w={9} color="#fff" up /></TrayCell>
          <TrayCell $w={37}><svg width="16" height="18" viewBox="0 0 16 18"><path d="M1 5H4L8 0V18L4 13H1Z" fill="#fff" /><path d="M12 5Q15 9 12 13" fill="none" stroke="#aaa" strokeWidth="1.5" /></svg></TrayCell>
          <TrayCell $w={25}><svg width="12" height="18" viewBox="0 0 12 18"><path d="M1 3H4V1H8V3H11V17H1Z" fill="none" stroke="#fff" strokeWidth="1.4" /><path d="M3 14.5H9" stroke="#fff" strokeWidth="2.4" /></svg></TrayCell>
          <TrayCell $w={36}><svg width="18" height="18" viewBox="0 0 18 18"><path d="M1.5 0V18" stroke="#fff" strokeWidth="1.6" /><path d="M3 1Q7 3 9 1T12 2V10Q8 9 7 10T3 9Z" fill="#fff" /><circle cx="13" cy="13" r="4.8" fill="#e22b31" /><path d="M11 11L15 15M15 11L11 15" stroke="#fff" strokeWidth="1.5" /></svg></TrayCell>
          <TrayCell $w={24}><svg width="15" height="13" viewBox="0 0 15 13"><path d="M1 11V13M4 9V13M7 6V13M10 3V13M13.5 0V13" stroke="#fff" strokeWidth="2" /></svg></TrayCell>
          <Clock>오후 4:38<br />2018-08-23</Clock>
          <ShowDesktop />
        </Tray>
      </Taskbar>
    </Desktop>
  );
}
